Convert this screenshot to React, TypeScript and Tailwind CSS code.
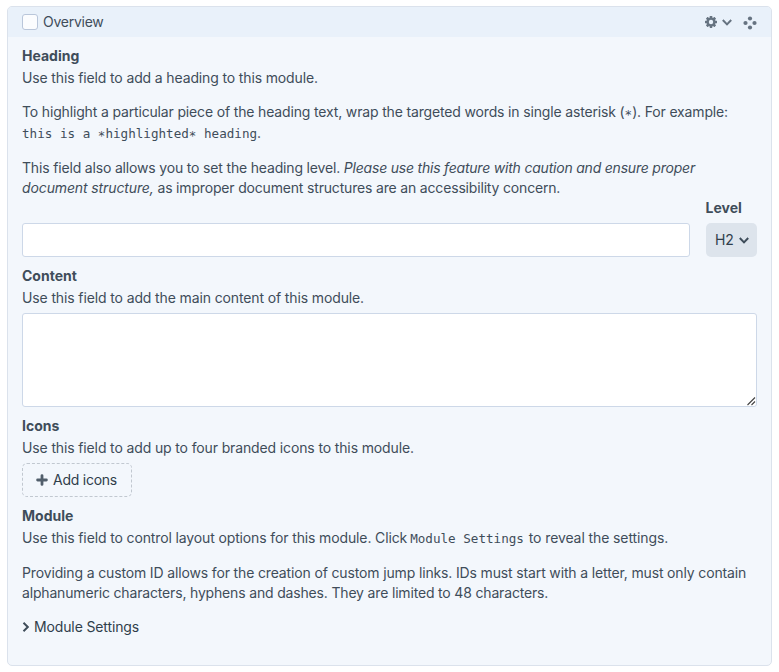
import type { ReactNode } from "react";

function Label({ children }: { children: ReactNode }) {
  return <h2 className="h-5 text-[14px] leading-5 font-bold tracking-[0px] text-[#3f4d5a]">{children}</h2>;
}

function Line({ children, className = "" }: { children: ReactNode; className?: string }) {
  return <span className={`block h-5 whitespace-nowrap ${className}`}>{children}</span>;
}

function Code({ children }: { children: ReactNode }) {
  return (
    <code className="font-['DejaVu_Sans_Mono',monospace] text-[12.6px] leading-none tracking-normal">{children}</code>
  );
}

function Star() {
  return <span className="inline-block translate-y-[2px]">*</span>;
}

function Chevron({ className = "" }: { className?: string }) {
  return (
    <svg viewBox="0 0 10 7" className={`h-[7px] w-[10px] ${className}`} fill="none" stroke="currentColor" strokeWidth="2">
      <path d="M.8 1 5 5.4 9.2 1" />
    </svg>
  );
}

function Gear() {
  return (
    <svg viewBox="-6 -6 12 12" className="size-3" fill="currentColor">
      {[0, 45, 90, 135].map((a) => (
        <rect key={a} x="-1.3" y="-6" width="2.6" height="12" rx="0.4" transform={`rotate(${a})`} />
      ))}
      <circle r="4.6" />
      <circle r="2.2" fill="#e9f1fa" />
    </svg>
  );
}

export default function App() {
  return (
    <div className="h-[672px] w-[779px] bg-white pt-[6px] pl-[7px] font-[Inter,sans-serif] text-[14px] leading-5 text-[#3f4d5a]">
      <section className="h-[660px] w-[765px] overflow-hidden rounded-[5px] border border-[#dbe2ec] bg-[#f3f7fc]">
        <header className="flex h-[30px] items-center bg-[#e9f1fa] pr-[14px] pl-[14px]">
          <span className="size-4 rounded-[3px] border border-[#b9c6da] bg-[#fbfcfe]" />
          <span className="ml-[5px] tracking-[-0.25px]">Overview</span>
          <div className="ml-auto flex items-center text-[#667381]">
            <Gear />
            <Chevron className="mt-px ml-[5px]" />
            <svg viewBox="0 0 14 14" className="mt-px ml-[11px] size-[14px]" fill="currentColor">
              <circle cx="7" cy="2.5" r="2.1" />
              <circle cx="2.5" cy="7" r="2.1" />
              <circle cx="11.5" cy="7" r="2.1" />
              <circle cx="7" cy="11.5" r="2.1" />
            </svg>
          </div>
        </header>

        <div className="px-[14px] pt-[9px]">
          <Label>Heading</Label>
          <p className="mt-[2px]">
            <Line className="tracking-[-0.137px]">Use this field to add a heading to this module.</Line>
          </p>
          <p className="mt-[14px]">
            <Line className="tracking-[-0.157px]">
              To highlight a particular piece of the heading text, wrap the targeted words in single asterisk (<Code><Star /></Code>). For example:
            </Line>
            <Line className="mt-px"><Code>this is a <Star />highlighted<Star /> heading</Code>.</Line>
          </p>
          <p className="mt-[15px]">
            <Line className="tracking-[-0.17px]">
              This field also allows you to set the heading level. <em className="tracking-[-0.21px]">Please use this feature with caution and ensure proper</em>
            </Line>
            <Line className="tracking-[-0.175px]">
              <em className="tracking-[-0.12px]">document structure,</em> as improper document structures are an accessibility concern.
            </Line>
          </p>

          <div className="flex items-end gap-4">
            <div className="h-[34px] flex-1 rounded-[3px] border border-[#cdd8e8] bg-white" />
            <div className="w-[51.5px]">
              <Label>Level</Label>
              <button className="mt-[5px] flex h-[34px] w-full items-center rounded-[5px] bg-[#dde4ec] pl-[9.5px] text-[#303e4b]">
                <span className="tracking-[-0.2px]">H2</span>
                <Chevron className="mt-px ml-[5px] text-[#3f4d5a]" />
              </button>
            </div>
          </div>

          <div className="mt-[9px]">
            <Label>Content</Label>
            <Line className="mt-[2px] tracking-[-0.125px]">Use this field to add the main content of this module.</Line>
            <div className="mt-[5px] flex h-[94px] items-end justify-end rounded-[3px] border border-[#cdd8e8] bg-white">
              <svg viewBox="0 0 9 9" className="size-[9px]" stroke="#444" strokeWidth="1.1">
                <path d="M.5 8 8 .5M4.5 8 8 4.5" />
              </svg>
            </div>
          </div>

          <div className="mt-[9px]">
            <Label>Icons</Label>
            <Line className="mt-[2px] tracking-[-0.133px]">Use this field to add up to four branded icons to this module.</Line>
            <button className="mt-[5px] flex h-[34px] w-[110px] items-center rounded-[5px] border border-dashed border-[#c1c8d0] pl-[14px] text-[#303e4b]">
              <svg viewBox="0 0 12 12" className="-ml-px size-[12px] text-[#515e6b]" stroke="currentColor" strokeWidth="2.8" strokeLinecap="round">
                <path d="M6 1.6v8.8M1.6 6h8.8" />
              </svg>
              <span className="ml-[5px] whitespace-nowrap tracking-[-0.25px]">Add icons</span>
            </button>
          </div>

          <div className="mt-[9px]">
            <Label>Module</Label>
            <Line className="mt-[2px] tracking-[-0.13px]">
              Use this field to control layout options for this module. Click<span className="ml-[3px]"><Code>Module Settings</Code></span><span className="ml-px tracking-[-0.1px]"> to reveal the settings.</span>
            </Line>
            <p className="mt-[15px]">
              <Line className="tracking-[-0.145px]">
                Providing a custom ID allows for the creation of custom jump links. IDs must start with a letter, must only contain
              </Line>
              <Line className="tracking-[-0.17px]">
                alphanumeric characters, hyphens and dashes. They are limited to 48 characters.
              </Line>
            </p>
            <div className="mt-[14px] flex items-center text-[#303e4b]">
              <svg viewBox="0 0 7 10" className="h-[10px] w-[7px] text-[#3f4d5a]" fill="none" stroke="currentColor" strokeWidth="2">
                <path d="M1.5.8 5.8 5 1.5 9.2" />
              </svg>
              <span className="ml-[5px] tracking-[-0.13px]">Module Settings</span>
            </div>
          </div>
        </div>
      </section>
    </div>
  );
}
